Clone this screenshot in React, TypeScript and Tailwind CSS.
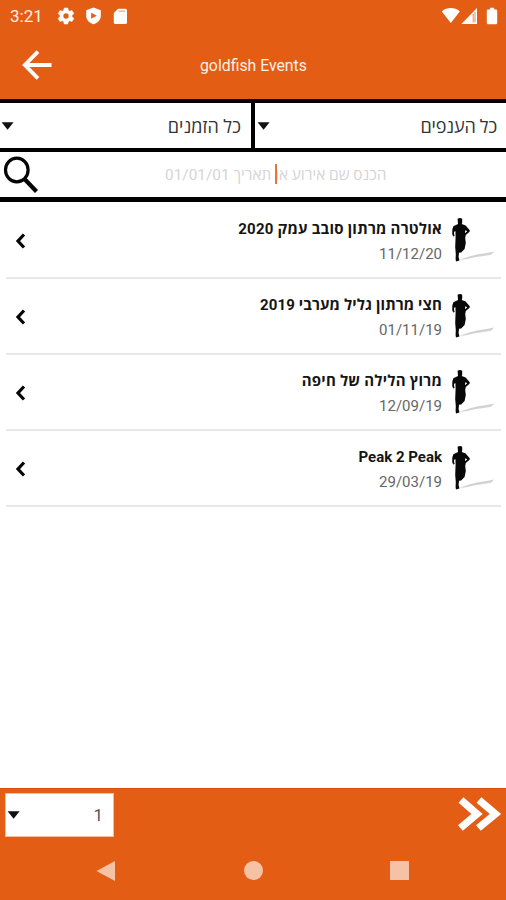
import React from "react";

type EventItem = { title: string; date: string; tracking: string };

const events: EventItem[] = [
  { title: "אולטרה מרתון סובב עמק 2020", date: "11/12/20", tracking: "tracking-[0.23px]" },
  { title: "חצי מרתון גליל מערבי 2019", date: "01/11/19", tracking: "tracking-[0.12px]" },
  { title: "מרוץ הלילה של חיפה", date: "12/09/19", tracking: "tracking-[0.22px]" },
  { title: "Peak 2 Peak", date: "29/03/19", tracking: "tracking-[0px]" },
];

function Runner() {
  return (
    <svg className="h-[46px] w-[46px] shrink-0" viewBox="0 0 46 46">
      <path d="M8.5 43 L20 39.2 L27 37.4 L35 36.2 L44.4 34.4 L41 37.8 L32 39.2 L26 40 L16 42.2 Z" fill="#d2d2d2" />
      <path
        d="M7.6 1.8 Q10 .2 12.2 1.8 L12.2 5.6 L11.8 7 L15.6 8.4 L19.8 13.2 L19.6 14.8 L15.8 18 L15.2 21 L15.8 26 L14.6 32 L11.2 35.6 L9 35.8 L8.6 40 L9.4 43.6 L6 44.4 L5.6 42 L5.8 37 L5.2 30 L5.6 19.5 L5.4 14 L4 15 L4.2 17.6 L4.6 19 L3.2 19.6 L2.2 17 L2.4 12 L3.4 9.2 L8 7 Z M15.2 13.2 L15 16.2 L17.2 14.2 Z"
        fill="#080808"
        fillRule="evenodd"
      />
    </svg>
  );
}

function Caret() {
  return (
    <svg className="h-[8px] w-[13px] shrink-0" viewBox="0 0 13 8">
      <path d="M.6 .3 H12.6 L6.6 7.8 Z" fill="#111" />
    </svg>
  );
}

function StatusBar() {
  return (
    <div className="flex h-[32px] items-center pl-[10px] pr-[8px] text-white">
      <span className="w-[46px] text-[17px] leading-[20px] text-[#fff0e6]">3:21</span>
      <svg className="h-[20px] w-[20px]" viewBox="0 0 24 24" fill="currentColor" stroke="currentColor" strokeWidth=".6">
        <path d="M19.14 12.94c.04-.3.06-.61.06-.94s-.02-.64-.07-.94l2.03-1.58a.49.49 0 0 0 .12-.61l-1.92-3.32a.49.49 0 0 0-.59-.22l-2.39.96c-.5-.38-1.03-.7-1.62-.94L14.4 2.81A.48.48 0 0 0 13.93 2.4h-3.84c-.24 0-.43.17-.47.41l-.36 2.54c-.59.24-1.13.57-1.62.94l-2.39-.96a.48.48 0 0 0-.59.22L2.74 8.87a.48.48 0 0 0 .12.61l2.03 1.58c-.05.3-.09.63-.09.94s.02.64.07.94l-2.03 1.58a.49.49 0 0 0-.12.61l1.92 3.32c.12.22.37.29.59.22l2.39-.96c.5.38 1.03.7 1.62.94l.36 2.54c.05.24.24.41.48.41h3.84c.24 0 .44-.17.47-.41l.36-2.54c.59-.24 1.13-.56 1.62-.94l2.39.96c.22.08.47 0 .59-.22l1.92-3.32a.48.48 0 0 0-.12-.61zM12 15.6a3.6 3.6 0 1 1 0-7.2 3.6 3.6 0 0 1 0 7.2z" />
      </svg>
      <svg className="ml-[9px] h-[18px] w-[17px]" viewBox="0 0 17 18">
        <path d="M8.5 .5 L15.8 3.2 V9 C15.8 13 12.4 16 8.5 17.2 C4.6 16 1.2 13 1.2 9 V3.2 Z" fill="#fff" />
        <path d="M6.2 5.8 L11.8 8.8 L6.2 11.8 Z" fill="#e35d15" />
      </svg>
      <svg className="ml-[11px] h-[17px] w-[15px]" viewBox="0 0 15 17">
        <path d="M5 .8 H12.4 Q14 .8 14 2.4 V14.4 Q14 16 12.4 16 H2.4 Q.8 16 .8 14.4 V5 Z" fill="#fff" />
        <path d="M5.6 3.2 H12" stroke="#efa277" strokeWidth="1.2" />
      </svg>
      <div className="flex-1" />
      <svg className="h-[18px] w-[20px]" viewBox="0 0 20 18">
        <path d="M.8 4.4 C6 0 13.6 0 18.8 4.4 L9.8 16 Z" fill="#fff" />
      </svg>
      <svg className="h-[18px] w-[17px]" viewBox="0 0 17 18">
        <path d="M16 1 V17 H.4 Z" fill="#fff" />
        <path d="M12.2 7 V15.4 M14 5 V15.4" stroke="#e98b58" strokeWidth="1" />
      </svg>
      <svg className="ml-[8px] h-[18px] w-[12px]" viewBox="0 0 12 18">
        <path d="M4 .8 H8.2 V2.4 H10 Q11.2 2.4 11.2 3.6 V16 Q11.2 17.2 10 17.2 H2 Q.8 17.2 .8 16 V3.6 Q.8 2.4 2 2.4 H4 Z" fill="#fff" />
      </svg>
    </div>
  );
}

export default function App() {
  return (
    <div className="flex h-[900px] w-[506px] flex-col overflow-hidden bg-white font-[Roboto,'Open_Sans','Noto_Sans',sans-serif]">
      <header className="h-[99px] shrink-0 bg-[#e35d15]">
        <StatusBar />
        <div className="flex h-[65px] items-center pl-[21px]">
          <svg className="h-[32px] w-[32px]" viewBox="0 0 32 32" fill="none" stroke="#fff" strokeWidth="3.8">
            <path d="M17 2.6 L3.8 16 L17 29.4 M3.8 16 H30.5" />
          </svg>
          <h1 className="ml-[147px] whitespace-nowrap pt-[2px] text-[15.8px] leading-[20px] text-[#fff0e6]">goldfish Events</h1>
        </div>
      </header>

      <div className="flex h-[53px] shrink-0 border-y-[4.5px] border-black bg-white text-[18px] text-[#333]">
        <div className="flex w-[251px] items-center justify-between pl-[1px] pr-[10px]">
          <Caret />
          <span dir="rtl" className="pt-[1px] tracking-[0.1px]">כל הזמנים</span>
        </div>
        <div className="w-[4px] bg-black" />
        <div className="flex flex-1 items-center justify-between pl-[2px] pr-[9px]">
          <Caret />
          <span dir="rtl" className="pt-[1px] tracking-[-0.15px]">כל הענפים</span>
        </div>
      </div>

      <div className="flex h-[50px] shrink-0 items-center border-b-[5px] border-black pl-[3px]">
        <svg className="h-[38px] w-[37px]" viewBox="0 0 37 38" fill="none" stroke="#050505">
          <ellipse cx="13.8" cy="14" rx="11.3" ry="11.8" strokeWidth="3.2" />
          <path d="M21.5 23 L33.5 35.5" strokeWidth="4.2" />
        </svg>
        <div className="relative ml-[125px] w-[221px] whitespace-nowrap pt-[3px] text-right text-[15.4px] text-[#d5d5d5]">
          <span dir="rtl">הכנס שם אירוע או תאריך 01/01/01</span>
          <span className="absolute left-[110px] top-[3px] h-[20px] w-[2px] bg-[#e9743b]" />
        </div>
      </div>

      <main className="flex-1 pl-[6px] pr-[5px]">
        <ul className="pt-[1px]">
          {events.map((e) => (
            <li key={e.date} className="flex h-[76px] items-center border-b-2 border-[#e8e8e8] pl-[8px] pr-[5px]">
              <svg className="mt-[2px] h-[16px] w-[12px] shrink-0" viewBox="0 0 12 16" fill="none" stroke="#050505" strokeWidth="3.2">
                <path d="M10 1.5 L4 8 L10 14.5" />
              </svg>
              <div className="mr-[8px] flex-1 pt-[4px] text-right">
                <div dir="auto" className={`whitespace-nowrap text-right text-[15px] font-bold leading-[25px] text-[#151515] ${e.tracking}`}>
                  <bdi>{e.title}</bdi>
                </div>
                <div className="text-[15px] leading-[25px] text-[#666]">{e.date}</div>
              </div>
              <Runner />
            </li>
          ))}
        </ul>
      </main>

      <footer className="h-[112px] shrink-0 border-t border-[#d94c08] bg-[#e35d15]">
        <div className="flex h-[52px] items-center justify-between pl-[5px] pr-[4px]">
          <div className="flex h-[44px] w-[109px] items-center justify-between border border-[#f3bd9f] bg-white pl-[1px] pr-[10px] text-[17px] text-[#555]">
            <Caret />
            <span className="pt-[1px]">1</span>
          </div>
          <svg className="mb-[2px] h-[36px] w-[45px]" viewBox="0 0 45 36" fill="none" stroke="#fff" strokeWidth="7.4">
            <path d="M4 4 L20 18 L3.4 32 M22 4 L38.4 18 L21.4 32" />
          </svg>
        </div>
        <nav className="flex h-[59px] items-center pl-[96px]">
          <svg className="h-[22px] w-[20px]" viewBox="0 0 20 22">
            <path d="M.5 11 L19 1 V21 Z" fill="#f5c2a6" />
          </svg>
          <div className="ml-[128px] h-[19px] w-[19px] rounded-full bg-[#f5c2a6]" />
          <div className="ml-[127px] h-[19px] w-[19px] bg-[#f5c2a6]" />
        </nav>
      </footer>
    </div>
  );
}
